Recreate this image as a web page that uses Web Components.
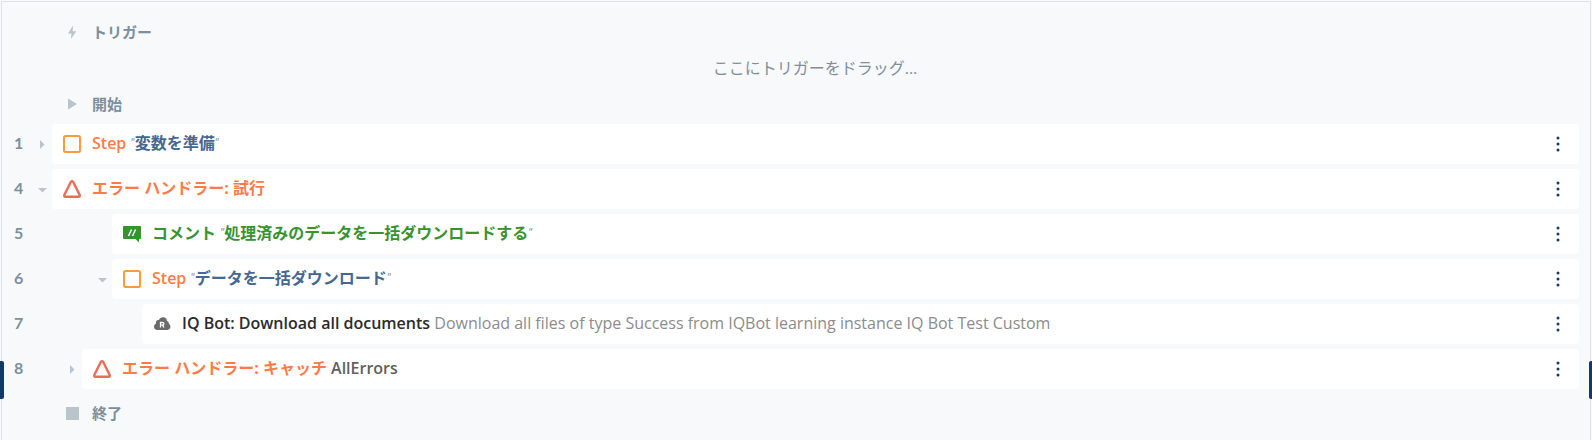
<!DOCTYPE html>
<html lang="ja">
<head>
<meta charset="utf-8">
<title>タスクエディター</title>
<style>
html, body { height: 100%; margin: 0; }
body { background: #f8f9fb; }
</style>
</head>
<body>
<flow-editor>
  <flow-label icon="bolt">トリガー</flow-label>
  <flow-drop>ここにトリガーをドラッグ...</flow-drop>
  <flow-label icon="play">開始</flow-label>
  <flow-list>
    <flow-row line="1" level="0" toggle="closed" icon="step"><flow-text kind="step">Step</flow-text> <flow-text kind="name" quoted>変数を準備</flow-text></flow-row>
    <flow-row line="4" level="0" toggle="open" icon="error"><flow-text kind="action">エラー ハンドラー: 試行</flow-text></flow-row>
    <flow-row line="5" level="2" icon="comment"><flow-text kind="comment">コメント</flow-text> <flow-text kind="comment" quoted>処理済みのデータを一括ダウンロードする</flow-text></flow-row>
    <flow-row line="6" level="2" toggle="open" icon="step"><flow-text kind="step">Step</flow-text> <flow-text kind="name" quoted>データを一括ダウンロード</flow-text></flow-row>
    <flow-row line="7" level="3" icon="cloud"><flow-text kind="command">IQ Bot: Download all documents</flow-text> <flow-text kind="detail">Download all files of type Success from IQBot learning instance IQ Bot Test Custom</flow-text></flow-row>
    <flow-row line="8" level="1" toggle="closed" icon="error"><flow-text kind="action">エラー ハンドラー: キャッチ</flow-text> <flow-text kind="value">AllErrors</flow-text></flow-row>
  </flow-list>
  <flow-label icon="stop">終了</flow-label>
</flow-editor>

<script>
const define = (name, html, setup) => {
  const template = document.createElement('template');
  template.innerHTML = html;
  customElements.define(name, class extends HTMLElement {
    connectedCallback() {
      if (this.shadowRoot) return;
      const root = this.attachShadow({ mode: 'open' });
      root.append(template.content.cloneNode(true));
      if (setup) setup(this, root);
    }
  });
};

const ICONS = {
  bolt: '<path d="M10 2.500 5 10.500h3.400L8 16l5.200-7.700H9.700z" fill="#b9c4cb"/>',
  play: '<path d="M5 3.500v11L14 9z" fill="#b9c4cb"/>',
  stop: '<path d="M3 3h13v13H3z" fill="#b9c4cb"/>',
  step: '<rect x="1" y="1" width="16" height="16" rx="1.500" fill="none" stroke="#fb9b3c" stroke-width="2"/>',
  error: '<path d="M7.900 1.800 1.300 15Q.700 16.800 2.500 16.800h13q1.800 0 1.200-1.800L10.100 1.800Q9 .500 7.900 1.800z" fill="none" stroke="#e96e56" stroke-width="2.400" stroke-linejoin="round"/>',
  comment: '<path d="M1 1h16q1 0 1 1v11q0 1-1 1h-1v3.500L12.500 14H1q-1 0-1-1V2Q0 1 1 1z" fill="#38932f"/><path d="M5.500 11 8.500 4.500M9.500 11l3-6.500" stroke="#fff" stroke-width="1.500"/>',
  cloud: '<path d="M4 15a3.500 3.500 0 0 1-3-3.500q0-2 2-3C2.500 6 4 4.500 6 5q1-3 4.500-2.800Q13.500 2.500 14 6q2 .200 1.800 2.500Q17.500 9.500 17.500 12q-.200 2.500-3 3z" fill="#6b6b6b"/><path d="M7.500 12.500v-5h2q1.400 0 1.400 1.300t-1.400 1.300h-2m2 0 1.500 2.400" fill="none" stroke="#fff" stroke-width="1.300"/>'
};

define('flow-icon', `
<style>:host { display: block; flex: none; width: 18px; height: 18px; } svg { display: block; overflow: visible; }</style>
<svg width="18" height="18" viewBox="0 0 18 18" aria-hidden="true"></svg>`);

define('flow-text', `
<style>
:host { color: #8c8c8c; }
:host([kind="action"]) { color: #ff7b45; font-weight: 700; }
:host([kind="step"]) { color: #ff7b45; font-weight: 600; }
:host([kind="name"]) { color: #466791; font-weight: 700; }
:host([kind="comment"]) { color: #38932f; font-weight: 700; }
:host([kind="command"]) { color: #2b2b2b; font-weight: 600; }
:host([kind="value"]) { color: #5f5f5f; font-weight: 600; }
.quote { display: none; color: #969696; font: italic 400 12px/20px "Lato", sans-serif; vertical-align: text-top; }
:host([quoted]) .quote { display: inline-block; }
</style><span class="quote">"</span><slot></slot><span class="quote">"</span>`);

define('flow-label', `
<style>
:host { display: flex; align-items: center; gap: 11px; height: 36px; padding-left: 63px; color: #7c909b; font-size: 15px; font-weight: 700; }
</style>
<flow-icon></flow-icon><span><slot></slot></span>`,
(host, root) => { root.querySelector('flow-icon').shadowRoot.querySelector('svg').innerHTML = ICONS[host.getAttribute('icon')]; });

define('flow-drop', `
<style>
:host { display: flex; align-items: center; justify-content: center; height: 36px; padding-left: 52px; padding-right: 12px; color: #7c909b; font-weight: 400; }
</style><slot></slot>`);

define('flow-list', `
<style>:host { display: flex; flex-direction: column; gap: 5px; padding: 2px 0 6px; }</style><slot></slot>`);

define('flow-row', `
<style>
:host { display: flex; align-items: center; height: 40px; }
.line { flex: none; box-sizing: border-box; width: 32px; padding-left: 14px; padding-bottom: 2px; color: #7c909b; font-family: "Lato", sans-serif; font-weight: 700; }
.toggle { flex: none; display: flex; align-items: center; justify-content: center; width: 20px; height: 40px; margin-left: calc(var(--level) * 30px); padding: 0; border: 0; background: none; }
.toggle[hidden] { display: flex; visibility: hidden; }
.card { flex: 1; min-width: 0; display: flex; align-items: center; gap: 11px; height: 40px; box-sizing: border-box; padding: 0 11px; margin-right: 11px; background: #fff; border-radius: 4px; }
.text { flex: 1; min-width: 0; padding-bottom: 2px; white-space: nowrap; line-height: 24px; }
.menu { flex: none; display: flex; align-items: center; justify-content: center; width: 20px; height: 30px; padding: 0; border: 0; background: none; }
svg { display: block; }
</style>
<span class="line"></span>
<button class="toggle" type="button" aria-label="展開"><svg width="10" height="10" viewBox="0 0 10 10"><path fill="#b9c4cb"/></svg></button>
<div class="card">
  <flow-icon></flow-icon>
  <div class="text"><slot></slot></div>
  <button class="menu" type="button" aria-label="メニュー"><svg width="4" height="16" viewBox="0 0 4 16" fill="#173a66"><circle cx="2" cy="2" r="1.500"/><circle cx="2" cy="8" r="1.500"/><circle cx="2" cy="14" r="1.500"/></svg></button>
</div>`,
(host, root) => {
  root.querySelector('.line').textContent = host.getAttribute('line');
  const toggle = root.querySelector('.toggle');
  const state = host.getAttribute('toggle');
  toggle.style.setProperty('--level', host.getAttribute('level'));
  toggle.hidden = !state;
  toggle.querySelector('path').setAttribute('d', state === 'open' ? 'M1 4h9L5.500 8.500z' : 'M3 1v9L7.500 5.500z');
  root.querySelector('flow-icon').shadowRoot.querySelector('svg').innerHTML = ICONS[host.getAttribute('icon')];
});

define('flow-editor', `
<style>
:host { display: block; position: relative; box-sizing: border-box; min-height: 100%; padding: 1px 1px 0 1px; overflow: hidden; background: #f8f9fb; font: 16px/24px "Open Sans", "Noto Sans CJK JP", sans-serif; }
main { box-sizing: border-box; min-height: calc(100vh - 1px); padding-top: 12px; border: 1px solid #dfe2e6; border-bottom: 0; }
.content { margin-left: -2px; }
.handle { position: absolute; top: 361px; width: 4px; height: 38px; background: #123a68; }
.left { left: 0; border-radius: 0 2px 2px 0; }
.right { right: 0; width: 3px; border-radius: 2px 0 0 2px; }
</style>
<main><div class="content"><slot></slot></div></main>
<div class="handle left"></div><div class="handle right"></div>`);
</script>
</body>
</html>
